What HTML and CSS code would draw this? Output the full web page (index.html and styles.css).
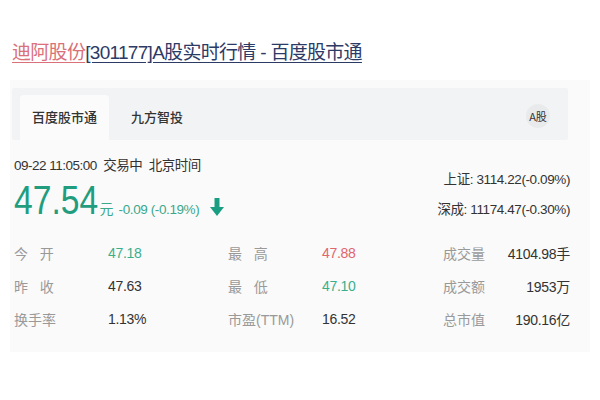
FILE: index.html
```html
<!DOCTYPE html>
<html lang="zh">
<head>
<meta charset="utf-8">
<link rel="stylesheet" href="styles.css">
</head>
<body>
<div class="page">
  <h1 class="title"><a class="t-red">迪阿股份</a><a class="t-blue">[301177]A股实时行情 - 百度股市通</a></h1>
  <div class="card">
    <div class="tabs">
      <div class="tab active">百度股市通</div>
      <div class="tab">九方智投</div>
      <div class="spacer"></div>
      <div class="badge">A股</div>
    </div>
    <div class="quote">
      <div class="left">
        <div class="time">09-22 11:05:00&nbsp;&nbsp;交易中&nbsp;&nbsp;北京时间</div>
        <div class="priceline">
          <span class="price">47.54</span><span class="unit">元</span>
          <span class="chg">-0.09 (-0.19%)</span>
          <svg class="arrow" width="16" height="20" viewBox="0 0 16 20"><path d="M5.5 1h5v9h4.5L8 19 1 10h4.5z" fill="#1a9e82"/></svg>
        </div>
      </div>
      <div class="right">
        <div class="idx">上证: 3114.22(-0.09%)</div>
        <div class="idx">深成: 11174.47(-0.30%)</div>
      </div>
    </div>
    <div class="grid">
      <span class="lab">今&nbsp;&nbsp;&nbsp;开</span><span class="val green">47.18</span>
      <span class="lab">最&nbsp;&nbsp;&nbsp;高</span><span class="val red">47.88</span>
      <span class="lab">成交量</span><span class="val r">4104.98手</span>
      <span class="lab">昨&nbsp;&nbsp;&nbsp;收</span><span class="val">47.63</span>
      <span class="lab">最&nbsp;&nbsp;&nbsp;低</span><span class="val green">47.10</span>
      <span class="lab">成交额</span><span class="val r">1953万</span>
      <span class="lab">换手率</span><span class="val">1.13%</span>
      <span class="lab">市盈(TTM)</span><span class="val">16.52</span>
      <span class="lab">总市值</span><span class="val r">190.16亿</span>
    </div>
  </div>
</div>
</body>
</html>
```
FILE: styles.css
```css
* { box-sizing: border-box; }
body {
  margin: 0;
  background: #ffffff;
  font-family: "Liberation Sans", "Noto Sans CJK SC", sans-serif;
  color: #333;
}
.page { width: 600px; height: 400px; padding: 40px 0 0 12px; }
.title {
  margin: 0;
  font-size: 19px;
  font-weight: normal;
  line-height: 26px;
  letter-spacing: -0.7px;
}
.title a { text-decoration: underline; text-underline-offset: 3px; }
.t-red { color: #d9707a; }
.t-blue { color: #2c3a66; }
.card {
  margin: 14px 0 0 -2px;
  width: 580px;
  height: 272px;
  background: #fafafa;
  padding: 8px 0 0 2px;
}
.tabs {
  display: flex;
  align-items: flex-end;
  height: 52px;
  width: 556px;
  background: #f2f3f5;
  padding: 0 0 0 8px;
  border-radius: 2px;
}
.tab {
  height: 45px;
  padding: 0 12px;
  font-family: "Noto Sans CJK SC", sans-serif;
  font-size: 13px;
  line-height: 44px;
  color: #333;
  font-weight: 500;
  margin-right: 10px;
}
.tab.active { background: #fbfbfc; border-radius: 4px 4px 0 0; }
.spacer { flex: 1; }
.badge {
  align-self: center;
  width: 24px;
  height: 24px;
  border-radius: 50%;
  background: #e9eaec;
  font-family: "Noto Sans CJK SC", sans-serif;
  font-size: 11px;
  line-height: 24px;
  text-align: center;
  margin-right: 18px;
  margin-top: 4px;
  color: #333;
}
.quote {
  display: flex;
  justify-content: space-between;
  padding: 17px 20px 0 2px;
}
.time { font-size: 13.5px; line-height: 18px; color: #333; letter-spacing: -0.5px; }
.priceline { display: flex; align-items: baseline; margin-top: 3px; height: 44px; }
.price {
  display: inline-block;
  font-size: 41px;
  line-height: 44px;
  color: #1f9d7e;
  transform: scaleX(0.82);
  transform-origin: left center;
  margin-right: -18px;
}
.unit { font-size: 14px; color: #3aa88c; margin-left: 1px; font-family: "Noto Sans CJK SC", sans-serif; }
.chg { font-size: 13.5px; color: #3aa88c; margin-left: 5px; letter-spacing: -0.4px; }
.arrow { margin-left: 10px; align-self: center; margin-top: 14px; }
.right { text-align: right; padding-top: 8px; }
.idx { font-size: 13.5px; line-height: 30px; color: #333; letter-spacing: -0.4px; }
.grid {
  display: grid;
  grid-template-columns: 94px 120px 94px 121px 1fr auto;
  grid-auto-rows: 33px;
  align-items: center;
  padding: 0 20px 0 2px;
  margin-top: 11px;
  font-size: 14px;
}
.lab { color: #999; }
.val { color: #333; letter-spacing: -0.3px; }
.val.r { text-align: right; }
.green { color: #3aaf8c; }
.red { color: #e0666e; }
```
